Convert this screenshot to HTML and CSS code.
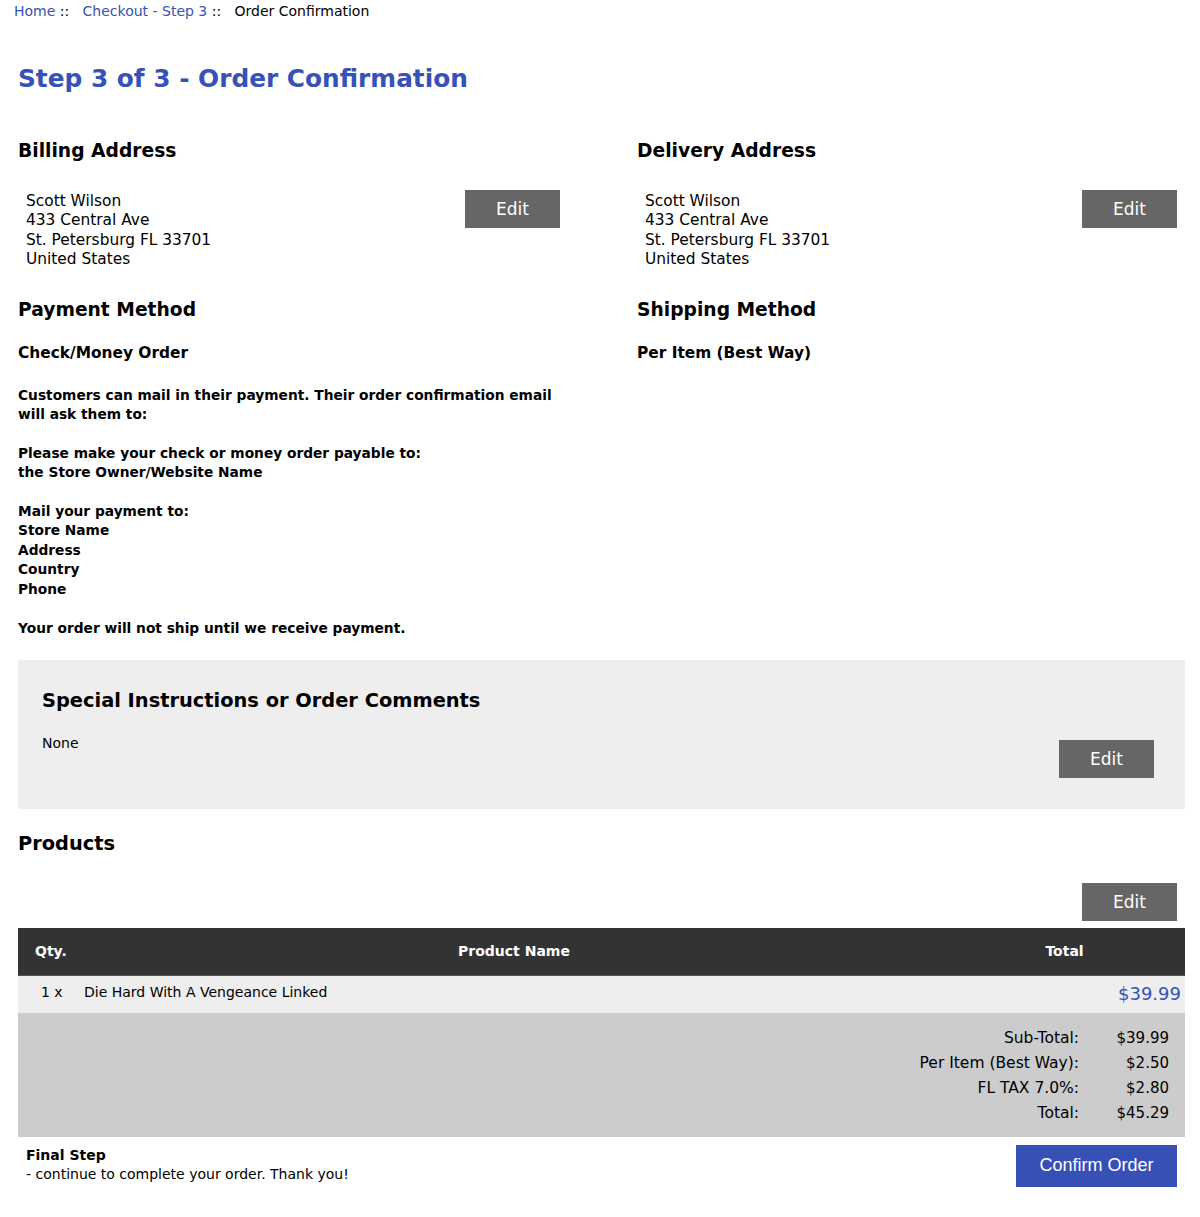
FILE: index.html
```html
<!DOCTYPE html>
<html lang="en">
<head>
<meta charset="utf-8">
<title>Order Confirmation</title>
<link rel="stylesheet" href="styles.css">
</head>
<body>
<div class="crumbs"><a href="#">Home</a>&nbsp;::&nbsp;&nbsp; <a href="#">Checkout - Step 3</a>&nbsp;::&nbsp;&nbsp; Order Confirmation</div>
<main class="page">
  <h1 class="title">Step 3 of 3 - Order Confirmation</h1>

  <div class="cols">
    <section class="col">
      <h2 class="col-head">Billing Address</h2>
      <div class="addr-row">
        <address class="addr">Scott Wilson<br>433 Central Ave<br>St. Petersburg FL 33701<br>United States</address>
        <button class="btn-edit">Edit</button>
      </div>
      <h2 class="col-head sub">Payment Method</h2>
      <div class="method">Check/Money Order</div>
      <p class="method-info">Customers can mail in their payment. Their order confirmation email will ask them to:<br><br>Please make your check or money order payable to:<br>the Store Owner/Website Name<br><br>Mail your payment to:<br>Store Name<br>Address<br>Country<br>Phone<br><br>Your order will not ship until we receive payment.</p>
    </section>
    <section class="col">
      <h2 class="col-head">Delivery Address</h2>
      <div class="addr-row">
        <address class="addr">Scott Wilson<br>433 Central Ave<br>St. Petersburg FL 33701<br>United States</address>
        <button class="btn-edit">Edit</button>
      </div>
      <h2 class="col-head sub">Shipping Method</h2>
      <div class="method">Per Item (Best Way)</div>
    </section>
  </div>

  <section class="comments">
    <h2 class="sec-head">Special Instructions or Order Comments</h2>
    <div class="comments-row">
      <div class="none">None</div>
      <button class="btn-edit">Edit</button>
    </div>
  </section>

  <h2 class="sec-head products-head">Products</h2>
  <div class="edit-line"><button class="btn-edit">Edit</button></div>

  <div class="cart">
    <div class="cart-head">
      <div class="c-qty">Qty.</div>
      <div class="c-name">Product Name</div>
      <div class="c-total">Total</div>
    </div>
    <div class="cart-row">
      <div class="r-qty">1 x</div>
      <div class="r-name">Die Hard With A Vengeance Linked</div>
      <div class="r-total">$39.99</div>
    </div>
    <div class="totals">
      <div class="t-label">Sub-Total:</div><div class="t-val">$39.99</div>
      <div class="t-label">Per Item (Best Way):</div><div class="t-val">$2.50</div>
      <div class="t-label">FL TAX 7.0%:</div><div class="t-val">$2.80</div>
      <div class="t-label">Total:</div><div class="t-val">$45.29</div>
    </div>
  </div>

  <div class="final">
    <div class="final-text"><strong>Final Step</strong><br>- continue to complete your order. Thank you!</div>
    <button class="btn-confirm">Confirm Order</button>
  </div>
</main>
</body>
</html>
```
FILE: styles.css
```css
* { box-sizing: border-box; }
html, body { margin: 0; padding: 0; background: #fff; }
body {
  font-family: "DejaVu Sans", Verdana, sans-serif;
  color: #000;
  font-size: 14px;
}
a { color: #3652b8; text-decoration: none; }

.crumbs {
  padding: 2px 0 0 14px;
  line-height: 18px;
  font-size: 14px;
}

.page {
  margin-left: 18px;
  width: 1167px;
}

.title {
  margin: 44px 0 0 0;
  font-size: 24.8px;
  line-height: 30px;
  color: #3652b8;
  font-weight: bold;
}

.cols {
  display: grid;
  grid-template-columns: 550px 548px;
  column-gap: 69px;
  margin-top: 46px;
}

.col-head {
  margin: 0;
  font-size: 18.7px;
  line-height: 22px;
  font-weight: bold;
}
.col-head.sub { margin-top: 29px; }

.addr-row {
  display: flex;
  justify-content: space-between;
  align-items: flex-start;
  margin-top: 28px;
  padding-right: 8px;
}
.addr {
  font-style: normal;
  font-size: 15.4px;
  line-height: 19.4px;
  padding-left: 8px;
  margin-top: 2px;
}

.btn-edit {
  width: 95px;
  height: 38px;
  border: 0;
  background: #666;
  color: #fff;
  font-family: "DejaVu Sans", Verdana, sans-serif;
  font-size: 17px;
  padding: 0;
}

.method {
  margin-top: 22px;
  font-size: 15.4px;
  line-height: 20px;
  font-weight: bold;
}
.method-info {
  margin: 23px 0 0 0;
  font-size: 13.75px;
  line-height: 19.4px;
  font-weight: bold;
}

.comments {
  margin-top: 22px;
  background: #eee;
  padding: 29px 31px 31px 24px;
}
.sec-head {
  margin: 0;
  font-size: 19.4px;
  line-height: 24px;
  font-weight: bold;
}
.comments-row {
  display: flex;
  justify-content: space-between;
  align-items: flex-start;
  margin-top: 21px;
}
.none { line-height: 18px; }
.comments-row .btn-edit { margin-top: 6px; }

.products-head { margin-top: 23px; }
.edit-line {
  display: flex;
  justify-content: flex-end;
  margin-top: 27px;
  padding-right: 8px;
}

.cart { margin-top: 7px; }
.cart-head, .cart-row {
  display: grid;
  grid-template-columns: 66px 1fr 241px;
}
.cart-head {
  background: #333;
  color: #fff;
  font-weight: bold;
  height: 48px;
  align-items: center;
  border-bottom: 1px solid #555;
  line-height: 18px;
}
.c-qty { padding-left: 17px; }
.c-name, .c-total { text-align: center; }

.cart-row {
  background: #eee;
  height: 37px;
  padding-top: 7px;
  align-items: start;
}
.r-qty { padding-left: 23px; line-height: 18px; }
.r-name { line-height: 18px; }
.r-total {
  text-align: right;
  padding-right: 4px;
  font-size: 18px;
  line-height: 22px;
  color: #3652b8;
}

.totals {
  background: #ccc;
  display: grid;
  grid-template-columns: 1fr 80px;
  column-gap: 10px;
  padding: 13.5px 16px 10.5px 0;
  font-size: 15.5px;
  line-height: 25px;
}
.t-label, .t-val { text-align: right; }
.t-val { font-size: 15px; }

.final {
  display: flex;
  justify-content: space-between;
  align-items: flex-start;
  padding: 0 8px;
}
.final-text {
  padding-top: 9.5px;
  line-height: 19px;
}
.btn-confirm {
  margin-top: 8px;
  width: 161px;
  height: 42px;
  border: 0;
  background: #3650b5;
  color: #fff;
  font-family: "Liberation Sans", Arial, sans-serif;
  font-size: 18px;
  padding: 0;
}
```
